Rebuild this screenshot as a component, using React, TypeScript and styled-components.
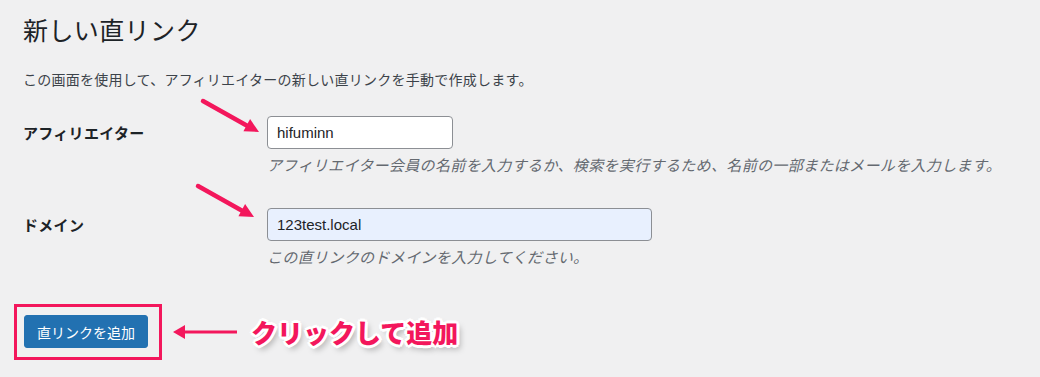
import React from 'react';
import styled, { createGlobalStyle } from 'styled-components';

const GlobalStyle = createGlobalStyle`
  html, body {
    margin: 0;
    padding: 0;
    background: #f0f0f1;
  }
  body {
    font-family: "Liberation Sans", "Noto Sans CJK JP", sans-serif;
    color: #1d2327;
  }
`;

const PINK = '#f3175c';

const Page = styled.div`
  width: 1040px;
  height: 377px;
  padding: 15px 0 0 23px;
  box-sizing: border-box;
  overflow: hidden;
`;

const Title = styled.h1`
  margin: 0;
  font-size: 25px;
  line-height: 32px;
  font-weight: 400;
  letter-spacing: 0.4px;
  color: #1d2327;
`;

const Lead = styled.p`
  margin: 23px 0 0;
  font-size: 14px;
  line-height: 20px;
  letter-spacing: 0.25px;
  color: #3c434a;
`;

const Row = styled.div<{ $top: number }>`
  position: relative;
  display: grid;
  grid-template-columns: 244px 1fr;
  margin-top: ${(p) => p.$top}px;
`;

const Label = styled.label`
  height: 33px;
  display: flex;
  align-items: center;
  font-size: 15px;
  font-weight: 700;
  letter-spacing: 0.3px;
  color: #1d2327;
`;

const Field = styled.div`
  display: flex;
  flex-direction: column;
  align-items: flex-start;
`;

const Input = styled.input<{ $width: number; $filled?: boolean }>`
  width: ${(p) => p.$width}px;
  height: 33px;
  box-sizing: border-box;
  padding: 0 9px;
  border: 1px solid #8c8f94;
  border-radius: 4px;
  background: ${(p) => (p.$filled ? '#e8f0fe' : '#fff')};
  font-family: "Liberation Sans", "Noto Sans CJK JP", sans-serif;
  font-size: 15px;
  color: #1d2327;
  outline: none;
`;

const Hint = styled.p`
  margin: 6px 0 0;
  font-size: 15px;
  line-height: 22px;
  font-style: italic;
  letter-spacing: 0.35px;
  color: #646970;
`;

const Pointer = styled.svg<{ $left: number; $top: number }>`
  position: absolute;
  left: ${(p) => p.$left}px;
  top: ${(p) => p.$top}px;
  pointer-events: none;
`;

const Footer = styled.div`
  display: flex;
  align-items: center;
  margin: 35px 0 0 -9px;
`;

const Highlight = styled.div`
  border: 3px solid ${PINK};
  padding: 8px 11px 9px 7px;
`;

const PrimaryButton = styled.button`
  width: 124px;
  height: 33px;
  border: 1px solid #2271b1;
  border-radius: 3px;
  background: #2271b1;
  color: #fff;
  font-family: "Liberation Sans", "Noto Sans CJK JP", sans-serif;
  font-size: 14px;
  cursor: pointer;
`;

const BackArrow = styled.svg`
  margin-left: 10px;
  flex: none;
`;

const Callout = styled.span`
  margin-left: 13px;
  font-family: "Noto Sans CJK JP", sans-serif;
  font-size: 26px;
  font-weight: 900;
  line-height: 34px;
  color: ${PINK};
  text-shadow:
    -2px -2px 0 #fff, 2px -2px 0 #fff, -2px 2px 0 #fff, 2px 2px 0 #fff,
    0 -3px 0 #fff, 0 3px 0 #fff, -3px 0 0 #fff, 3px 0 0 #fff,
    3px 4px 6px rgba(0, 0, 0, 0.35);
`;

const DiagonalArrow: React.FC<{ left: number; top: number }> = ({ left, top }) => (
  <Pointer $left={left} $top={top} width="64" height="40" viewBox="0 0 64 40">
    <line x1="4" y1="4" x2="49" y2="29.3" stroke={PINK} strokeWidth="4.5" strokeLinecap="round" />
    <polygon points="60,35 44.4,34.3 51.1,22.1" fill={PINK} />
  </Pointer>
);

export default function App() {
  return (
    <>
      <GlobalStyle />
      <Page>
        <Title>新しい直リンク</Title>
        <Lead>この画面を使用して、アフィリエイターの新しい直リンクを手動で作成します。</Lead>

        <Row $top={26}>
          <DiagonalArrow left={176} top={-19} />
          <Label>アフィリエイター</Label>
          <Field>
            <Input $width={186} defaultValue="hifuminn" />
            <Hint>アフィリエイター会員の名前を入力するか、検索を実行するため、名前の一部またはメールを入力します。</Hint>
          </Field>
        </Row>

        <Row $top={31}>
          <DiagonalArrow left={171} top={-26} />
          <Label>ドメイン</Label>
          <Field>
            <Input $width={385} $filled defaultValue="123test.local" />
            <Hint>この直リンクのドメインを入力してください。</Hint>
          </Field>
        </Row>

        <Footer>
          <Highlight>
            <PrimaryButton>直リンクを追加</PrimaryButton>
          </Highlight>
          <BackArrow width="66" height="20" viewBox="0 0 66 20">
            <line x1="10" y1="10" x2="65" y2="10" stroke={PINK} strokeWidth="3" />
            <polygon points="1,10 13,3 13,17" fill={PINK} />
          </BackArrow>
          <Callout>クリックして追加</Callout>
        </Footer>
      </Page>
    </>
  );
}
